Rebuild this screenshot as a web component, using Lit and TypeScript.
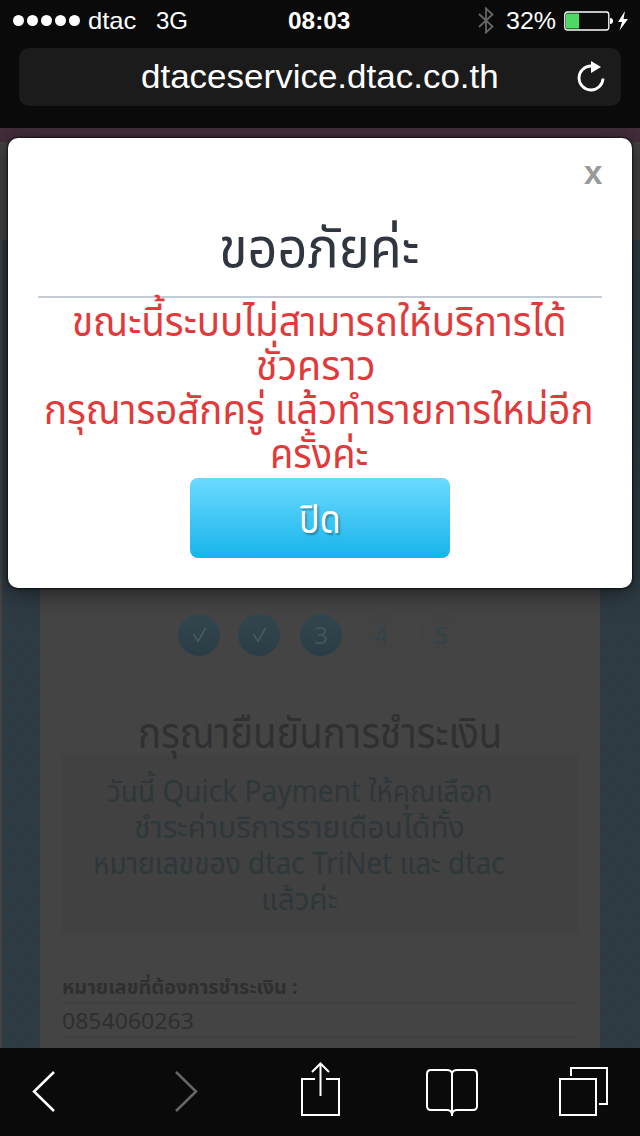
import { html, css, LitElement } from 'lit';
import { customElement, property } from 'lit/decorators.js';

// one line of text stretched or squeezed to a fixed width
@customElement('fit-text')
class FitText extends LitElement {
  @property({ type: Number }) w = 100;

  static styles = css`
    :host {
      display: block;
      white-space: nowrap;
      flex: none;
    }
    span {
      display: inline-block;
      transform-origin: 0 50%;
    }
  `;

  updated() {
    const span = this.renderRoot.querySelector('span') as HTMLElement;
    this.style.width = `${this.w}px`;
    span.style.transform = `scaleX(${this.w / span.offsetWidth})`;
  }

  render() {
    return html`<span><slot></slot></span>`;
  }
}

@customElement('app-root')
class AppRoot extends LitElement {
  static properties = {
    steps: { type: Array },
    errorLines: { type: Array },
    infoLines: { type: Array },
  };

  declare steps: { label: string; done: boolean }[];
  declare errorLines: { text: string; w: number; shift: number }[];
  declare infoLines: { text: string; w: number }[];

  constructor() {
    super();
    this.steps = [
      { label: '', done: true },
      { label: '', done: true },
      { label: '3', done: true },
      { label: '4', done: false },
      { label: '5', done: false },
    ];
    this.errorLines = [
      { text: 'ขณะนี้ระบบไม่สามารถให้บริการได้', w: 495, shift: -2 },
      { text: 'ชั่วคราว', w: 120, shift: -8 },
      { text: 'กรุณารอสักครู่ แล้วทำรายการใหม่อีก', w: 550, shift: -2 },
      { text: 'ครั้งค่ะ', w: 98, shift: -2 },
    ];
    this.infoLines = [
      { text: 'วันนี้ Quick Payment ให้คุณเลือก', w: 385 },
      { text: 'ชำระค่าบริการรายเดือนได้ทั้ง', w: 331 },
      { text: 'หมายเลขของ dtac TriNet และ dtac', w: 412 },
      { text: 'แล้วค่ะ', w: 77 },
    ];
  }

  static styles = css`
    :host {
      display: flex;
      flex-direction: column;
      width: 640px;
      height: 1136px;
      overflow: hidden;
      background: #0a0a0a;
      font-family: 'Noto Sans', 'Noto Sans Thai', sans-serif;
    }
    svg {
      display: block;
      fill: none;
    }
    .status {
      display: grid;
      grid-template-columns: 275px 62px 1fr;
      align-items: center;
      height: 41px;
      padding: 0 11px 0 13px;
      color: #fff;
      font: 24px/41px 'Liberation Sans', sans-serif;
    }
    .side {
      display: flex;
      align-items: center;
    }
    .side.right {
      justify-content: flex-end;
    }
    .dots {
      display: flex;
      gap: 3px;
      margin-right: 8px;
    }
    .dot {
      width: 11px;
      height: 11px;
      border-radius: 50%;
      background: #fff;
    }
    .network {
      margin-left: 20px;
    }
    .time {
      font-weight: bold;
    }
    .percent {
      margin: 0 8px 0 12px;
    }
    .address {
      display: flex;
      align-items: center;
      justify-content: space-between;
      height: 58px;
      margin: 7px 19px 22px;
      padding: 0 16px 0 122px;
      box-sizing: border-box;
      border-radius: 10px;
      background: #1b1b1b;
      color: #fff;
      font: 34px/56px 'Liberation Sans', sans-serif;
    }
    .url {
      height: 58px;
    }
    .viewport {
      position: relative;
      flex: none;
      height: 920px;
      overflow: hidden;
      background: #434343;
    }
    .strip {
      height: 14px;
      background: #432e3b;
    }
    .body {
      margin: 98px 0 0 2px;
      padding: 0 40px 0 38px;
      height: 808px;
      background: repeating-linear-gradient(140deg, #2d3b43 0, #2d3b43 4px, #303a3f 7px, #2d3b43 10px);
    }
    .sheet {
      height: 808px;
      padding: 374px 22px 0;
      box-sizing: border-box;
      background: #444;
    }
    .steps {
      display: flex;
      gap: 18px;
      padding-left: 116px;
    }
    .step {
      width: 42px;
      height: 42px;
      border-radius: 50%;
      text-align: center;
      font: 24px/42px 'Noto Sans', sans-serif;
      color: #32424a;
      background: #434343;
    }
    .step.done {
      color: #455257;
      background: linear-gradient(#33464e, #2a3d46);
    }
    .step:nth-child(3) {
      margin-left: 2px;
    }
    .heading {
      display: flex;
      justify-content: center;
      height: 60px;
      margin-top: 38px;
      color: #303030;
      font-size: 43px;
      line-height: 76px;
    }
    .info {
      display: flex;
      flex-direction: column;
      align-items: center;
      height: 180px;
      padding: 16px 42px 0 0;
      box-sizing: border-box;
      border: 2px solid #404342;
      background: #404140;
      color: #2e373c;
      font-size: 31px;
      line-height: 36px;
    }
    .row {
      height: 34px;
      border-bottom: 2px solid #404042;
      box-sizing: border-box;
      color: #2f2f2f;
      font-size: 22px;
      line-height: 32px;
    }
    .row.label {
      margin-top: 36px;
      font-size: 19px;
      line-height: 34px;
      font-weight: bold;
    }
    .dialog {
      position: absolute;
      left: 8px;
      top: 10px;
      width: 624px;
      height: 450px;
      box-sizing: border-box;
      padding: 0 30px;
      display: flex;
      flex-direction: column;
      align-items: center;
      border-radius: 10px;
      background: #fff;
      box-shadow: 0 0 2px 1px rgba(0, 0, 0, 0.6), 0 4px 22px rgba(0, 0, 0, 0.55);
    }
    .close {
      align-self: flex-end;
      height: 74px;
      color: #999;
      font: bold 33px/69px 'Liberation Sans', sans-serif;
    }
    .title {
      display: flex;
      justify-content: center;
      width: 100%;
      height: 86px;
      box-sizing: border-box;
      padding-right: 3px;
      border-bottom: 2px solid #c5cbd4;
      color: #2f3640;
      font-size: 55px;
      line-height: 68px;
    }
    .message {
      display: flex;
      flex-direction: column;
      align-items: center;
      height: 180px;
      color: #e13a3b;
      font-size: 41px;
      line-height: 44px;
    }
    .ok {
      display: flex;
      justify-content: center;
      width: 260px;
      height: 80px;
      padding: 0;
      border: 0;
      border-radius: 8px;
      background: linear-gradient(#6bdaff, #18b4ea);
      color: #fff;
      font: 39px/80px 'Noto Sans', 'Noto Sans Thai', sans-serif;
      text-shadow: 2px 2px 2px rgba(0, 0, 0, 0.3);
    }
    .toolbar {
      display: grid;
      grid-template-columns: 143px 127px 124px 134px 50px;
      height: 88px;
      box-sizing: border-box;
      padding: 12px 31px 0;
    }
  `;

  renderCheck() {
    return html`
      <svg width="42" height="42" viewBox="0 0 42 42" stroke="#4a585d" stroke-width="1.6">
        <path d="M15.5 20L20 27.5L27.5 14"/>
      </svg>
    `;
  }

  render() {
    return html`
      <div class="status">
        <div class="side">
          <div class="dots">${[1, 2, 3, 4, 5].map(() => html`<div class="dot"></div>`)}</div>
          <fit-text w="48">dtac</fit-text>
          <fit-text class="network" w="32">3G</fit-text>
        </div>
        <fit-text class="time" w="62">08:03</fit-text>
        <div class="side right">
          <svg width="16" height="27" viewBox="0 0 16 27" stroke="#666" stroke-width="1.8">
            <path d="M1 7L14.5 19.5L8 25.5V1.5L14.5 7.5L1 20"/>
          </svg>
          <fit-text class="percent" w="50">32%</fit-text>
          <svg width="65" height="22" viewBox="0 0 65 22">
            <rect x="0.8" y="2" width="44" height="18" rx="2.5" stroke="#fff" stroke-width="1.3"/>
            <rect x="2" y="3.5" width="13" height="15" fill="#4cd964"/>
            <path d="M46 8Q49 8 49 11Q49 14 46 14Z" fill="#fff"/>
            <path d="M61 1L54 12H58L55.5 20.5L64 9H59.5Z" fill="#fff"/>
          </svg>
        </div>
      </div>

      <div class="address">
        <fit-text class="url" w="358">dtaceservice.dtac.co.th</fit-text>
        <svg width="28" height="32" viewBox="0 0 28 32">
          <path d="M14 5A12 12 0 1 0 26 17.5" stroke="#fff" stroke-width="2.8"/>
          <path d="M14 0L24 6L14 12Z" fill="#fff"/>
        </svg>
      </div>

      <div class="viewport">
        <div class="strip"></div>
        <div class="body">
          <div class="sheet">
            <div class="steps">
              ${this.steps.map(s => html`
                <div class="step ${s.done ? 'done' : ''}">${s.label || this.renderCheck()}</div>
              `)}
            </div>
            <div class="heading"><fit-text w="364">กรุณายืนยันการชำระเงิน</fit-text></div>
            <div class="info">
              ${this.infoLines.map(l => html`<fit-text .w=${l.w}>${l.text}</fit-text>`)}
            </div>
            <div class="row label"><fit-text w="236">หมายเลขที่ต้องการชำระเงิน :</fit-text></div>
            <div class="row"><fit-text w="132">0854060263</fit-text></div>
          </div>
        </div>

        <div class="dialog">
          <fit-text class="close" w="18">x</fit-text>
          <div class="title"><fit-text w="200">ขออภัยค่ะ</fit-text></div>
          <div class="message">
            ${this.errorLines.map(l => html`
              <fit-text .w=${l.w} style="margin-left: ${l.shift}px">${l.text}</fit-text>
            `)}
          </div>
          <button class="ok"><fit-text w="42">ปิด</fit-text></button>
        </div>
      </div>

      <div class="toolbar">
        <svg width="26" height="64" viewBox="0 0 26 64" stroke="#fff" stroke-width="2.5">
          <path d="M23 12L3 31.5L23 51"/>
        </svg>
        <svg width="26" height="64" viewBox="0 0 26 64" stroke="#666" stroke-width="2.5">
          <path d="M2 12L22 31.5L2 51"/>
        </svg>
        <svg width="40" height="64" viewBox="0 0 40 64" stroke="#fff" stroke-width="2">
          <path d="M14 19H1V55H38V19H25M19.5 36V4M11 12L19.5 3.5L28 12"/>
        </svg>
        <svg width="54" height="64" viewBox="0 0 54 64" stroke="#fff" stroke-width="2">
          <path d="M27 56V13M27 13Q26 10 22 10H6Q2 10 2 14V46Q2 50 6 50H22Q26 50 27 54Q28 50 32 50H48Q52 50 52 46V14Q52 10 48 10H32Q28 10 27 13"/>
        </svg>
        <svg width="50" height="64" viewBox="0 0 50 64" stroke="#fff" stroke-width="2">
          <path d="M1 19H37V55H1ZM12 16V8H48V44H40"/>
        </svg>
      </div>
    `;
  }
}
